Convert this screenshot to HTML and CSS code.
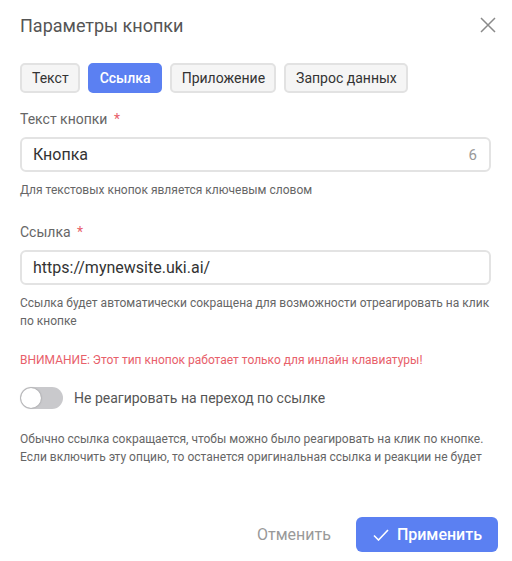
FILE: index.html
```html
<!DOCTYPE html>
<html lang="ru">
<head>
    <meta charset="UTF-8">
    <meta name="viewport" content="width=device-width, initial-scale=1.0">
    <title>Параметры кнопки</title>
    <link rel="stylesheet" href="styles.css">
</head>
<body>
    <div class="modal">
        <div class="modal-header">
            <h2>Параметры кнопки</h2>
            <button class="close-btn" aria-label="Закрыть">
                <svg width="16" height="16" viewBox="0 0 16 16"><path d="M1 1L15 15M15 1L1 15" stroke="#8a8a8a" stroke-width="1.5" fill="none"/></svg>
            </button>
        </div>

        <div class="tabs">
            <button class="tab">Текст</button>
            <button class="tab active">Ссылка</button>
            <button class="tab">Приложение</button>
            <button class="tab">Запрос данных</button>
        </div>

        <div class="form-group">
            <label class="field-label">Текст кнопки <span class="required">*</span></label>
            <div class="input-box">
                <input type="text" value="Кнопка">
                <span class="counter">6</span>
            </div>
            <p class="hint">Для текстовых кнопок является ключевым словом</p>
        </div>

        <div class="form-group">
            <label class="field-label">Ссылка <span class="required">*</span></label>
            <div class="input-box">
                <input type="text" value="https://mynewsite.uki.ai/">
            </div>
            <p class="hint">Ссылка будет автоматически сокращена для возможности отреагировать на клик по кнопке</p>
        </div>

        <p class="warning">ВНИМАНИЕ: Этот тип кнопок работает только для инлайн клавиатуры!</p>

        <label class="switch-row">
            <span class="switch"><span class="knob"></span></span>
            <span class="switch-label">Не реагировать на переход по ссылке</span>
        </label>

        <p class="hint note">Обычно ссылка сокращается, чтобы можно было реагировать на клик по кнопке. Если включить эту опцию, то останется оригинальная ссылка и реакции не будет</p>

        <div class="modal-footer">
            <button class="btn-cancel">Отменить</button>
            <button class="btn-apply">
                <svg width="16" height="12" viewBox="0 0 16 12"><path d="M1 6.5L5.5 11L15 1" stroke="#fff" stroke-width="1.6" fill="none"/></svg>
                Применить
            </button>
        </div>
    </div>
</body>
</html>
```

FILE: styles.css
```css
:root {
    --primary-color: #5b80f2;
    --text-dark: #333333;
    --text-medium: #555555;
    --text-light: #666666;
    --border-color: #e3e3e3;
    --error-text: #e8606a;
}

body {
    margin: 0;
    font-family: Roboto, "Noto Sans", sans-serif;
    background: #ffffff;
}

.modal {
    width: 512px;
    box-sizing: border-box;
    padding: 12px 21px 0 20px;
}

.modal-header {
    display: flex;
    justify-content: space-between;
    align-items: center;
    height: 26px;
}

h2 {
    margin: 0;
    font-size: 18px;
    font-weight: 400;
    color: var(--text-medium);
}

.close-btn {
    background: none;
    border: none;
    padding: 0;
    margin-right: -5px;
    cursor: pointer;
    display: flex;
}

.tabs {
    display: flex;
    gap: 8px;
    margin-top: 25px;
}

.tab {
    height: 30px;
    padding: 0 9px 0 10px;
    font-family: inherit;
    font-size: 14px;
    color: var(--text-dark);
    background: #f5f5f5;
    border: 2px solid #e2e2e2;
    border-radius: 5px;
    cursor: pointer;
}

.tab.active {
    background: var(--primary-color);
    border-color: var(--primary-color);
    color: #ffffff;
    font-weight: 500;
}

.form-group {
    margin-top: 17px;
}

.form-group + .form-group {
    margin-top: 24px;
}

.field-label {
    display: block;
    font-size: 14px;
    color: var(--text-light);
    line-height: 18px;
}

.required {
    color: var(--error-text);
    margin-left: 3px;
}

.input-box {
    display: flex;
    align-items: center;
    margin-top: 9px;
    height: 35px;
    box-sizing: border-box;
    border: 2px solid var(--border-color);
    border-radius: 6px;
    padding: 0 12px 0 11px;
}

.input-box input {
    flex: 1;
    border: none;
    outline: none;
    padding: 0;
    font-family: inherit;
    font-size: 16px;
    color: var(--text-dark);
    background: transparent;
}

.counter {
    font-size: 15px;
    color: #999999;
}

.hint {
    margin: 9px 0 0;
    font-size: 12px;
    line-height: 18px;
    color: var(--text-light);
}

.warning {
    margin: 21px 0 0;
    font-size: 12px;
    line-height: 18px;
    color: var(--error-text);
}

.switch-row {
    display: flex;
    align-items: center;
    gap: 11px;
    margin-top: 18px;
}

.switch {
    width: 43px;
    height: 22px;
    border-radius: 11px;
    background: #c9c9cc;
    display: flex;
    align-items: center;
    padding: 0 1px;
    box-sizing: border-box;
}

.knob {
    width: 20px;
    height: 20px;
    border-radius: 50%;
    background: #ffffff;
    box-shadow: 0 0 2px rgba(0, 0, 0, 0.35);
}

.switch-label {
    font-size: 14px;
    color: var(--text-medium);
}

.note {
    margin-top: 21px;
}

.modal-footer {
    display: flex;
    justify-content: flex-end;
    align-items: center;
    gap: 25px;
    margin-top: 51px;
    margin-right: -7px;
}

.btn-cancel {
    background: none;
    border: none;
    padding: 0;
    font-family: inherit;
    font-size: 16px;
    color: #999999;
    cursor: pointer;
}

.btn-apply {
    display: flex;
    align-items: center;
    gap: 8px;
    height: 35px;
    padding: 0 16px 0 17px;
    background: var(--primary-color);
    border: none;
    border-radius: 6px;
    color: #ffffff;
    font-family: inherit;
    font-size: 16px;
    font-weight: 500;
    cursor: pointer;
}
```
